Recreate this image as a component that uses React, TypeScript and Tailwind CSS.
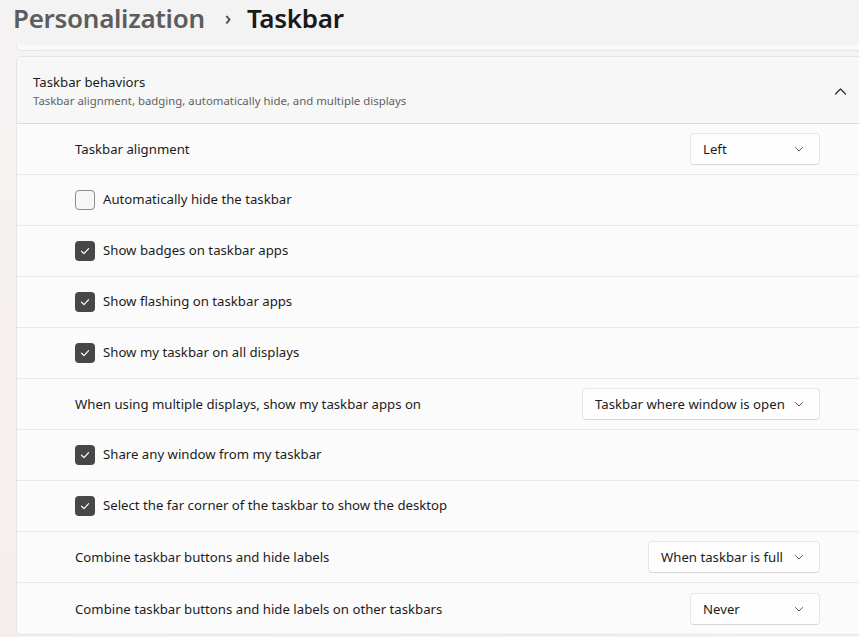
import React from "react";

type Row =
  | { kind: "select"; label: string; value: string; width: string }
  | { kind: "check"; label: string; checked: boolean };

const rows: Row[] = [
  { kind: "select", label: "Taskbar alignment", value: "Left", width: "w-[130px]" },
  { kind: "check", label: "Automatically hide the taskbar", checked: false },
  { kind: "check", label: "Show badges on taskbar apps", checked: true },
  { kind: "check", label: "Show flashing on taskbar apps", checked: true },
  { kind: "check", label: "Show my taskbar on all displays", checked: true },
  {
    kind: "select",
    label: "When using multiple displays, show my taskbar apps on",
    value: "Taskbar where window is open",
    width: "w-[238px]",
  },
  { kind: "check", label: "Share any window from my taskbar", checked: true },
  { kind: "check", label: "Select the far corner of the taskbar to show the desktop", checked: true },
  {
    kind: "select",
    label: "Combine taskbar buttons and hide labels",
    value: "When taskbar is full",
    width: "w-[172px]",
  },
  {
    kind: "select",
    label: "Combine taskbar buttons and hide labels on other taskbars",
    value: "Never",
    width: "w-[130px]",
  },
];

function ChevronDown() {
  return (
    <svg width="10" height="10" viewBox="0 0 10 10" fill="none">
      <path d="M1.5 3.5 L5 7 L8.5 3.5" stroke="#5a5a5a" strokeWidth="1" strokeLinecap="round" strokeLinejoin="round" />
    </svg>
  );
}

function ChevronUp() {
  return (
    <svg width="13" height="13" viewBox="0 0 13 13" fill="none">
      <path d="M1.5 9 L6.5 4 L11.5 9" stroke="#2a2a2a" strokeWidth="1.2" strokeLinecap="round" strokeLinejoin="round" />
    </svg>
  );
}

function Checkbox({ checked }: { checked: boolean }) {
  if (!checked) {
    return <div className="w-5 h-5 rounded-[4px] border border-[#8d8d8d] bg-[#f6f6f6]" />;
  }
  return (
    <div className="w-5 h-5 rounded-[4px] bg-[#474747] flex items-center justify-center">
      <svg width="12" height="12" viewBox="0 0 12 12" fill="none">
        <path d="M2.5 6.2 L5 8.6 L9.6 3.6" stroke="#ffffff" strokeWidth="1.2" strokeLinecap="round" strokeLinejoin="round" />
      </svg>
    </div>
  );
}

function Select({ value, width }: { value: string; width: string }) {
  return (
    <div
      className={`${width} h-8 flex items-center justify-between pl-3 pr-[15px] rounded-[4px] bg-[#fefefe] border border-[#e6e6e6] border-b-[#d6d6d6] text-[13.2px] text-[#1b1b1b] whitespace-nowrap`}
    >
      <span className="pt-[2px]">{value}</span>
      <ChevronDown />
    </div>
  );
}

export default function App() {
  return (
    <div
      className="w-[859px] h-[637px] overflow-hidden bg-gradient-to-tr from-[#f7eeec] via-[#f4f3f3] to-[#f3f3f3] text-[#1b1b1b]"
      style={{ fontFamily: '"Noto Sans", "Open Sans", sans-serif' }}
    >
      {/* Breadcrumb title */}
      <div className="h-[45px] pl-[13px] flex items-start">
        <h1 className="leading-[36px] text-[26px] font-semibold flex items-center tracking-[-0.3px]">
          <span className="text-[#5d5d5d]">Personalization</span>
          <span className="ml-[20px] mr-[16px] text-[#4a4a4a] text-[20px] font-medium">›</span>
          <span className="text-[#1a1a1a]">Taskbar</span>
        </h1>
      </div>

      {/* bottom of previous card */}
      <div className="ml-4 w-[864px] h-[6px] bg-[#f9f9f9] border-x border-b border-[#e6e6e6] rounded-b-[5px]" />

      {/* Expander card */}
      <div className="ml-4 mt-[5px] w-[864px] rounded-[5px] border border-[#e5e5e5] bg-[#fbfbfb] overflow-hidden">
        <div className="h-[67px] flex items-center justify-between pl-[16px] pr-[32px] pt-[2px] bg-[#f7f7f7] border-b border-[#dcdcdc]">
          <div className="flex flex-col">
            <span className="text-[13.2px] leading-[19px]">Taskbar behaviors</span>
            <span className="text-[11.4px] leading-[17px] text-[#616161]">
              Taskbar alignment, badging, automatically hide, and multiple displays
            </span>
          </div>
          <ChevronUp />
        </div>

        {rows.map((row, i) => (
          <div
            key={row.label}
            className={`h-[51px] flex items-center justify-between pl-[58px] pr-[59px] ${
              i < rows.length - 1 ? "border-b border-[#e8e8e8]" : ""
            }`}
          >
            {row.kind === "check" ? (
              <div className="flex items-center gap-2">
                <Checkbox checked={row.checked} />
                <span className="text-[13.2px]">{row.label}</span>
              </div>
            ) : (
              <>
                <span className="text-[13.2px] pt-[2px]">{row.label}</span>
                <Select value={row.value} width={row.width} />
              </>
            )}
          </div>
        ))}
      </div>
    </div>
  );
}
